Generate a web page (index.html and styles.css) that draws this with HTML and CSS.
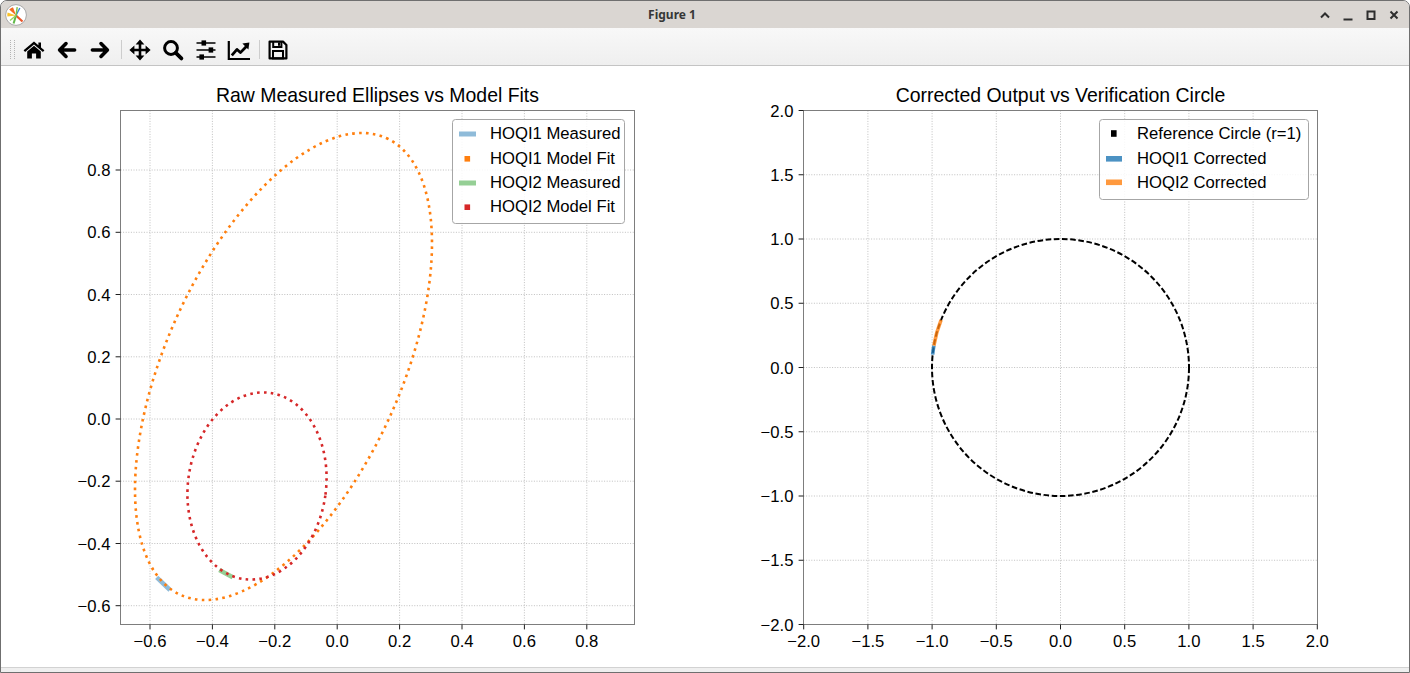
FILE: index.html
```html
<!DOCTYPE html>
<html>
<head>
<meta charset="utf-8">
<title>Figure 1</title>
<link rel="stylesheet" href="styles.css">
</head>
<body>
<div class="window">
  <div class="titlebar">
    <div class="appicon">
      <svg width="22" height="22" viewBox="0 0 22 22">
        <circle cx="11" cy="11" r="10.4" fill="#fff" stroke="#a9a9a9" stroke-width="1"/>
        <path d="M11 11.5 L4.2 5.6 A9 9 0 0 1 8 3.2 Z" fill="#f26a21"/>
        <path d="M11 11.5 L2.6 8.6 A9 9 0 0 0 2.4 12.6 Z" fill="#f9c22b"/>
        <path d="M11 11.5 L17.5 17.5" stroke="#e9562a" stroke-width="2.2"/>
        <path d="M11 11.5 L14.8 4" stroke="#3d8ad6" stroke-width="1.4"/>
        <path d="M11 11.5 L12.2 3.2" stroke="#7cc242" stroke-width="1.4"/>
        <path d="M11 11.5 L8.6 19.5" stroke="#5fb847" stroke-width="2"/>
        <path d="M11 11.5 L5 16.5" stroke="#97d160" stroke-width="1.4"/>
      </svg>
    </div>
    <div class="title">Figure 1</div>
    <div class="wbtns">
      <div class="wbtn"><svg width="16" height="16" viewBox="0 0 16 16"><path d="M4 10.5 L8 6.5 L12 10.5" class="wico"/></svg></div>
      <div class="wbtn"><svg width="16" height="16" viewBox="0 0 16 16"><path d="M3.5 12.5 H12.5" class="wico"/></svg></div>
      <div class="wbtn"><svg width="16" height="16" viewBox="0 0 16 16"><rect x="4.5" y="4.5" width="7" height="7.5" class="wico"/></svg></div>
      <div class="wbtn"><svg width="16" height="16" viewBox="0 0 16 16"><path d="M4.5 4.5 L11.5 11.5 M11.5 4.5 L4.5 11.5" class="wico"/></svg></div>
    </div>
  </div>

  <div class="toolbar">
    <div class="grip"></div>
    <div class="tb">
      <svg width="24" height="24" viewBox="0 0 24 24">
        <path d="M12 3.4 L1.6 12.3 L3.1 14 L12 6.4 L20.9 14 L22.4 12.3 L19 9.4 V4.6 H16.4 V7.2 Z"/>
        <path d="M5.2 13.6 L12 7.8 L18.8 13.6 V20.4 H14.1 V15.6 H9.9 V20.4 H5.2 Z"/>
      </svg>
    </div>
    <div class="tb">
      <svg width="24" height="24" viewBox="0 0 24 24"><path class="arrow" d="M11 5.6 L4.6 12 L11 18.4 M5.6 12 H19.6"/></svg>
    </div>
    <div class="tb">
      <svg width="24" height="24" viewBox="0 0 24 24"><path class="arrow" d="M13 5.6 L19.4 12 L13 18.4 M18.4 12 H4.4"/></svg>
    </div>
    <div class="sep"></div>
    <div class="tb">
      <svg width="24" height="24" viewBox="0 0 24 24">
        <path d="M12 4.5 V19.5 M4.5 12 H19.5" stroke="#000" stroke-width="2.6" fill="none"/>
        <path d="M12 1.4 L7.6 6.4 H16.4 Z M12 22.6 L7.6 17.6 H16.4 Z M1.4 12 L6.4 7.6 V16.4 Z M22.6 12 L17.6 7.6 V16.4 Z"/>
      </svg>
    </div>
    <div class="tb">
      <svg width="24" height="24" viewBox="0 0 24 24">
        <circle cx="10" cy="10" r="6.4" fill="none" stroke="#000" stroke-width="3"/>
        <path d="M14.8 14.8 L20.4 20.4" stroke="#000" stroke-width="3.8" stroke-linecap="round"/>
      </svg>
    </div>
    <div class="tb">
      <svg width="24" height="24" viewBox="0 0 24 24">
        <path d="M2.5 5 H21.5 M2.5 12 H21.5 M2.5 19 H21.5" stroke="#000" stroke-width="1.7"/>
        <rect x="7.5" y="2.4" width="4.6" height="5.2"/>
        <rect x="14.6" y="9.4" width="4.6" height="5.2"/>
        <rect x="5.4" y="16.4" width="4.6" height="5.2"/>
      </svg>
    </div>
    <div class="tb">
      <svg width="24" height="24" viewBox="0 0 24 24">
        <path d="M1.8 3 V21 H23" fill="none" stroke="#000" stroke-width="2.2"/>
        <path d="M4.8 17.4 L10 11.4 L13.4 14.6 L19.6 8.2" fill="none" stroke="#000" stroke-width="2.8" stroke-linejoin="round"/>
        <path d="M22.4 4.6 L15.4 5.6 L21.4 11.6 Z"/>
      </svg>
    </div>
    <div class="sep"></div>
    <div class="tb">
      <svg width="24" height="24" viewBox="0 0 24 24">
        <path d="M3.6 3.6 H17 L20.4 7 V20.4 H3.6 Z" fill="none" stroke="#000" stroke-width="2.2" stroke-linejoin="round"/>
        <path d="M7.2 3.6 V9 H15.4 V3.6" fill="none" stroke="#000" stroke-width="2"/>
        <rect x="12" y="4.4" width="2" height="3.4"/>
        <rect x="7" y="13" width="10" height="7.4" fill="none" stroke="#000" stroke-width="2"/>
      </svg>
    </div>
  </div>

  <div class="canvas">
    <svg class="fig" width="1408" height="601" viewBox="1 66 1408 601">
      <!-- ===== Left axes ===== -->
      <g class="grid">
        <line x1="150" y1="110.5" x2="150" y2="624.5"/>
        <line x1="212.4" y1="110.5" x2="212.4" y2="624.5"/>
        <line x1="274.8" y1="110.5" x2="274.8" y2="624.5"/>
        <line x1="337.2" y1="110.5" x2="337.2" y2="624.5"/>
        <line x1="399.6" y1="110.5" x2="399.6" y2="624.5"/>
        <line x1="462" y1="110.5" x2="462" y2="624.5"/>
        <line x1="524.4" y1="110.5" x2="524.4" y2="624.5"/>
        <line x1="586.8" y1="110.5" x2="586.8" y2="624.5"/>
        <line x1="120.5" y1="170" x2="634.5" y2="170"/>
        <line x1="120.5" y1="232.3" x2="634.5" y2="232.3"/>
        <line x1="120.5" y1="294.5" x2="634.5" y2="294.5"/>
        <line x1="120.5" y1="356.8" x2="634.5" y2="356.8"/>
        <line x1="120.5" y1="419" x2="634.5" y2="419"/>
        <line x1="120.5" y1="481.2" x2="634.5" y2="481.2"/>
        <line x1="120.5" y1="543.5" x2="634.5" y2="543.5"/>
        <line x1="120.5" y1="605.7" x2="634.5" y2="605.7"/>
      </g>
      <line class="meas1" x1="156.7" y1="577.3" x2="170" y2="590"/>
      <line class="meas2" x1="219.3" y1="570" x2="232.7" y2="577.3"/>
      <ellipse class="fit1" cx="283.5" cy="366.5" rx="250.5" ry="117.6" transform="rotate(-65.8 283.5 366.5)"/>
      <ellipse class="fit2" cx="257" cy="486" rx="69" ry="94" transform="rotate(8 257 486)"/>
      <rect class="spine" x="120.5" y="110.5" width="514" height="514"/>
      <g class="ticks">
        <line x1="150" y1="624.5" x2="150" y2="629.4"/>
        <line x1="212.4" y1="624.5" x2="212.4" y2="629.4"/>
        <line x1="274.8" y1="624.5" x2="274.8" y2="629.4"/>
        <line x1="337.2" y1="624.5" x2="337.2" y2="629.4"/>
        <line x1="399.6" y1="624.5" x2="399.6" y2="629.4"/>
        <line x1="462" y1="624.5" x2="462" y2="629.4"/>
        <line x1="524.4" y1="624.5" x2="524.4" y2="629.4"/>
        <line x1="586.8" y1="624.5" x2="586.8" y2="629.4"/>
        <line x1="115.6" y1="170" x2="120.5" y2="170"/>
        <line x1="115.6" y1="232.3" x2="120.5" y2="232.3"/>
        <line x1="115.6" y1="294.5" x2="120.5" y2="294.5"/>
        <line x1="115.6" y1="356.8" x2="120.5" y2="356.8"/>
        <line x1="115.6" y1="419" x2="120.5" y2="419"/>
        <line x1="115.6" y1="481.2" x2="120.5" y2="481.2"/>
        <line x1="115.6" y1="543.5" x2="120.5" y2="543.5"/>
        <line x1="115.6" y1="605.7" x2="120.5" y2="605.7"/>
      </g>
      <g class="tl xl">
        <text x="150" y="646.5">−0.6</text>
        <text x="212.4" y="646.5">−0.4</text>
        <text x="274.8" y="646.5">−0.2</text>
        <text x="337.2" y="646.5">0.0</text>
        <text x="399.6" y="646.5">0.2</text>
        <text x="462" y="646.5">0.4</text>
        <text x="524.4" y="646.5">0.6</text>
        <text x="586.8" y="646.5">0.8</text>
      </g>
      <g class="tl yl">
        <text x="110.5" y="176">0.8</text>
        <text x="110.5" y="238.3">0.6</text>
        <text x="110.5" y="300.5">0.4</text>
        <text x="110.5" y="362.8">0.2</text>
        <text x="110.5" y="425">0.0</text>
        <text x="110.5" y="487.2">−0.2</text>
        <text x="110.5" y="549.5">−0.4</text>
        <text x="110.5" y="611.7">−0.6</text>
      </g>
      <text class="axtitle" x="377.5" y="102">Raw Measured Ellipses vs Model Fits</text>
      <g class="legend">
        <rect class="lbox" x="452.5" y="119.5" width="172" height="104" rx="3"/>
        <rect x="459" y="131.5" width="17" height="5" fill="#8fbbd9"/>
        <rect x="464.5" y="156" width="5.6" height="5.6" fill="#ff7f0e"/>
        <rect x="459" y="180.5" width="17" height="5" fill="#95cf95"/>
        <rect x="464.5" y="204.4" width="5.6" height="5.6" fill="#d62728"/>
        <text class="lt" x="490" y="139.3">HOQI1 Measured</text>
        <text class="lt" x="490" y="163.5">HOQI1 Model Fit</text>
        <text class="lt" x="490" y="187.8">HOQI2 Measured</text>
        <text class="lt" x="490" y="212">HOQI2 Model Fit</text>
      </g>

      <!-- ===== Right axes ===== -->
      <g class="grid">
        <line x1="867.9" y1="110.5" x2="867.9" y2="624.5"/>
        <line x1="932.1" y1="110.5" x2="932.1" y2="624.5"/>
        <line x1="996.3" y1="110.5" x2="996.3" y2="624.5"/>
        <line x1="1060.5" y1="110.5" x2="1060.5" y2="624.5"/>
        <line x1="1124.7" y1="110.5" x2="1124.7" y2="624.5"/>
        <line x1="1188.9" y1="110.5" x2="1188.9" y2="624.5"/>
        <line x1="1253.1" y1="110.5" x2="1253.1" y2="624.5"/>
        <line x1="803.5" y1="174.75" x2="1317.5" y2="174.75"/>
        <line x1="803.5" y1="239" x2="1317.5" y2="239"/>
        <line x1="803.5" y1="303.25" x2="1317.5" y2="303.25"/>
        <line x1="803.5" y1="367.5" x2="1317.5" y2="367.5"/>
        <line x1="803.5" y1="431.75" x2="1317.5" y2="431.75"/>
        <line x1="803.5" y1="496" x2="1317.5" y2="496"/>
        <line x1="803.5" y1="560.25" x2="1317.5" y2="560.25"/>
      </g>
      <circle class="refcircle" cx="1060.5" cy="367.5" r="128.5"/>
      <path class="corr1" d="M932.64 354.65 A128.5 128.5 0 0 1 933.87 345.65"/>
      <path class="corr2" d="M933.87 345.65 A128.5 128.5 0 0 1 941.1 319.96"/>
      <rect class="spine" x="803.5" y="110.5" width="514" height="514"/>
      <g class="ticks">
        <line x1="803.7" y1="624.5" x2="803.7" y2="629.4"/>
        <line x1="867.9" y1="624.5" x2="867.9" y2="629.4"/>
        <line x1="932.1" y1="624.5" x2="932.1" y2="629.4"/>
        <line x1="996.3" y1="624.5" x2="996.3" y2="629.4"/>
        <line x1="1060.5" y1="624.5" x2="1060.5" y2="629.4"/>
        <line x1="1124.7" y1="624.5" x2="1124.7" y2="629.4"/>
        <line x1="1188.9" y1="624.5" x2="1188.9" y2="629.4"/>
        <line x1="1253.1" y1="624.5" x2="1253.1" y2="629.4"/>
        <line x1="1317.3" y1="624.5" x2="1317.3" y2="629.4"/>
        <line x1="798.6" y1="110.5" x2="803.5" y2="110.5"/>
        <line x1="798.6" y1="174.75" x2="803.5" y2="174.75"/>
        <line x1="798.6" y1="239" x2="803.5" y2="239"/>
        <line x1="798.6" y1="303.25" x2="803.5" y2="303.25"/>
        <line x1="798.6" y1="367.5" x2="803.5" y2="367.5"/>
        <line x1="798.6" y1="431.75" x2="803.5" y2="431.75"/>
        <line x1="798.6" y1="496" x2="803.5" y2="496"/>
        <line x1="798.6" y1="560.25" x2="803.5" y2="560.25"/>
        <line x1="798.6" y1="624.5" x2="803.5" y2="624.5"/>
      </g>
      <g class="tl xl">
        <text x="803.7" y="646.5">−2.0</text>
        <text x="867.9" y="646.5">−1.5</text>
        <text x="932.1" y="646.5">−1.0</text>
        <text x="996.3" y="646.5">−0.5</text>
        <text x="1060.5" y="646.5">0.0</text>
        <text x="1124.7" y="646.5">0.5</text>
        <text x="1188.9" y="646.5">1.0</text>
        <text x="1253.1" y="646.5">1.5</text>
        <text x="1317.3" y="646.5">2.0</text>
      </g>
      <g class="tl yl">
        <text x="793.5" y="116.5">2.0</text>
        <text x="793.5" y="180.75">1.5</text>
        <text x="793.5" y="245">1.0</text>
        <text x="793.5" y="309.25">0.5</text>
        <text x="793.5" y="373.5">0.0</text>
        <text x="793.5" y="437.75">−0.5</text>
        <text x="793.5" y="502">−1.0</text>
        <text x="793.5" y="566.25">−1.5</text>
        <text x="793.5" y="630.5">−2.0</text>
      </g>
      <text class="axtitle" x="1060.5" y="102">Corrected Output vs Verification Circle</text>
      <g class="legend">
        <rect class="lbox" x="1099.5" y="119.5" width="209" height="80" rx="3"/>
        <rect x="1111" y="130.2" width="5.6" height="6.6" fill="#000"/>
        <rect x="1106" y="156" width="16" height="5.6" fill="#4c92c3"/>
        <rect x="1106" y="179.5" width="16" height="5.6" fill="#ff993e"/>
        <text class="lt" x="1137" y="139.3">Reference Circle (r=1)</text>
        <text class="lt" x="1137" y="163.7">HOQI1 Corrected</text>
        <text class="lt" x="1137" y="188.2">HOQI2 Corrected</text>
      </g>
    </svg>
  </div>
  <div class="status"></div>
</div>
</body>
</html>
```

FILE: styles.css
```css
* { box-sizing: border-box; }
html, body { margin: 0; padding: 0; background: #ffffff; }

.window {
  width: 1410px;
  height: 673px;
  border: 1px solid #6f6f6f;
  border-radius: 7px 7px 0 0;
  overflow: hidden;
  display: flex;
  flex-direction: column;
  background: #efefef;
}

/* ---- title bar ---- */
.titlebar {
  height: 27px;
  flex: none;
  background: #dad6d2;
  display: flex;
  align-items: center;
}
.appicon {
  width: 22px;
  height: 22px;
  margin-left: 4px;
  flex: none;
  display: flex;
}
.title {
  flex: 1;
  text-align: center;
  padding-left: 4px;
  font: bold 12px "Noto Sans", "DejaVu Sans", sans-serif;
  color: #363636;
}
.wbtns {
  display: flex;
  padding-right: 4px;
  flex: none;
}
.wbtn {
  width: 23px;
  height: 27px;
  display: flex;
  align-items: center;
  justify-content: center;
}
.wico {
  fill: none;
  stroke: #2e2e2e;
  stroke-width: 2;
}

/* ---- toolbar ---- */
.toolbar {
  height: 38px;
  flex: none;
  padding-top: 6px;
  background: linear-gradient(#f8f8f8, #efefef);
  border-bottom: 1px solid #c4c4c4;
  display: flex;
  align-items: center;
}
.grip {
  width: 5px;
  height: 19px;
  margin-left: 9px;
  margin-right: 2.5px;
  border-left: 1px dotted #b4b4b4;
  border-right: 1px dotted #b4b4b4;
  align-self: center;
}
.tb {
  width: 33px;
  height: 31px;
  display: flex;
  align-items: center;
  justify-content: center;
  flex: none;
}
.tb svg { fill: #000; }
.arrow {
  fill: none;
  stroke: #000;
  stroke-width: 3.6;
  stroke-linecap: round;
  stroke-linejoin: round;
}
.sep {
  width: 1px;
  height: 19px;
  margin: 0 1.7px 0 4px;
  background: #cdcdcd;
  flex: none;
}

/* ---- canvas ---- */
.canvas {
  height: 601px;
  flex: none;
  background: #ffffff;
}
.fig { display: block; }
.status {
  flex: 1;
  background: #efefef;
  border-top: 1px solid #d2d2d2;
}

/* ---- plot elements ---- */
.grid line {
  stroke: #b0b0b0;
  stroke-width: 0.8;
  stroke-dasharray: 1 1.6;
}
.spine {
  fill: none;
  stroke: #7d7d7d;
  stroke-width: 1;
}
.ticks line {
  stroke: #1e1e1e;
  stroke-width: 1;
}
.tl text {
  font-family: "Liberation Sans", Arial, sans-serif;
  font-size: 16.67px;
  fill: #000;
}
.xl text { text-anchor: middle; }
.yl text { text-anchor: end; }
.axtitle {
  font-family: "Liberation Sans", Arial, sans-serif;
  font-size: 19.45px;
  text-anchor: middle;
  fill: #000;
}
.lbox {
  fill: #ffffff;
  fill-opacity: 0.85;
  stroke: #a6a6a6;
  stroke-width: 1;
}
.lt {
  font-family: "Liberation Sans", Arial, sans-serif;
  font-size: 16.67px;
  fill: #000;
}
.meas1 { stroke: #8fbbd9; stroke-width: 4.5; }
.meas2 { stroke: #95cf95; stroke-width: 4.5; }
.fit1 {
  fill: none;
  stroke: #ff7f0e;
  stroke-width: 2.6;
  stroke-dasharray: 2.6 4.3;
}
.fit2 {
  fill: none;
  stroke: #d62728;
  stroke-width: 2.6;
  stroke-dasharray: 2.6 4.3;
}
.refcircle {
  fill: none;
  stroke: #000;
  stroke-width: 2;
  stroke-dasharray: 5.6 2.6;
}
.corr1 { fill: none; stroke: #1f77b4; stroke-opacity: 0.8; stroke-width: 3.6; }
.corr2 { fill: none; stroke: #ff7f0e; stroke-opacity: 0.8; stroke-width: 3.6; }
```
